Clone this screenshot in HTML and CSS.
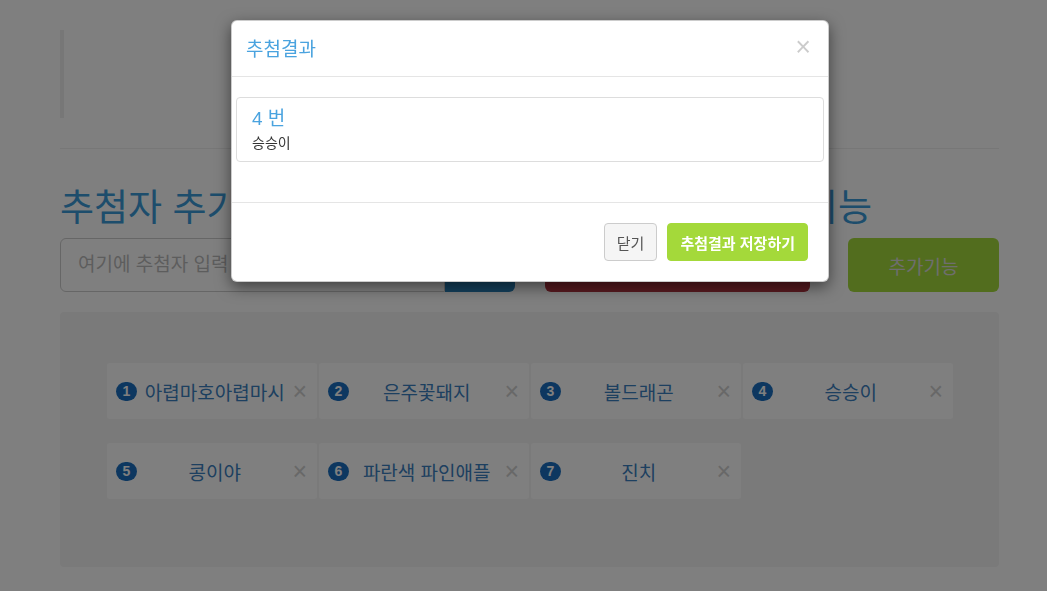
FILE: index.html
```html
<!DOCTYPE html>
<html lang="ko">
<head>
<meta charset="UTF-8">
<title>추첨기</title>
<meta name="viewport" content="width=device-width, initial-scale=1.0">
<link rel="stylesheet" href="styles.css">
</head>
<body>

<div class="container">
    <blockquote class="intro"></blockquote>
    <hr>

    <div class="top-row">
        <div class="col-left">
            <h1>추첨자 추가</h1>
            <div class="input-group">
                <input type="text" placeholder="여기에 추첨자 입력">
                <button class="btn-add">추가</button>
            </div>
        </div>
        <div class="col-right">
            <h1>추첨하기 및 추가기능</h1>
            <div class="action-row">
                <button class="btn-draw">추첨하기</button>
                <button class="btn-extra">추가기능</button>
            </div>
        </div>
    </div>

    <div class="well">
        <div class="tag"><span class="badge">1</span><span class="name">아렵마호아렵마시</span><span class="remove">×</span></div>
        <div class="tag"><span class="badge">2</span><span class="name">은주꽃돼지</span><span class="remove">×</span></div>
        <div class="tag"><span class="badge">3</span><span class="name">볼드래곤</span><span class="remove">×</span></div>
        <div class="tag"><span class="badge">4</span><span class="name">승승이</span><span class="remove">×</span></div>
        <div class="tag"><span class="badge">5</span><span class="name">콩이야</span><span class="remove">×</span></div>
        <div class="tag"><span class="badge">6</span><span class="name">파란색 파인애플</span><span class="remove">×</span></div>
        <div class="tag"><span class="badge">7</span><span class="name">진치</span><span class="remove">×</span></div>
    </div>
</div>

<div class="modal-backdrop"></div>

<div class="modal">
    <div class="modal-header">
        <span class="close">×</span>
        <h4 class="modal-title">추첨결과</h4>
    </div>
    <div class="modal-body">
        <div class="panel">
            <div class="result-no">4 번</div>
            <div class="result-name">승승이</div>
        </div>
    </div>
    <div class="modal-footer">
        <button class="btn btn-default">닫기</button>
        <button class="btn btn-save">추첨결과 저장하기</button>
    </div>
</div>

</body>
</html>
```

FILE: styles.css
```css
* {
    box-sizing: border-box;
}

body {
    margin: 0;
    font-family: "Liberation Sans", "Noto Sans CJK KR", sans-serif;
    font-size: 14px;
    color: #333;
    background: #fff;
}

.container {
    width: 939px;
    margin: 0 48px 0 60px;
}

.intro {
    margin: 30px 0 0 0;
    height: 88px;
    border-left: 4px solid #eee;
}

hr {
    margin: 30px 0 20px 0;
    border: 0;
    border-top: 1px solid #eee;
}

.top-row {
    display: flex;
    gap: 30px;
}

.col-left {
    width: 455px;
}

.col-right {
    flex: 1;
}

h1 {
    font-size: 37px;
    font-weight: normal;
    line-height: 40px;
    margin: 20px 0 9px 0;
    color: #3a9ad8;
    white-space: nowrap;
}

.input-group {
    display: flex;
    height: 54px;
}

.input-group input {
    flex: 1;
    border: 1px solid #ccc;
    border-radius: 6px 0 0 6px;
    padding: 0 17px;
    font-size: 19px;
    font-family: inherit;
}

.input-group input::placeholder {
    color: #bbb;
}

.btn-add {
    width: 70px;
    border: 0;
    border-radius: 0 6px 6px 0;
    background: #2980b9;
    color: #fff;
    font-size: 18px;
    font-family: inherit;
}

.action-row {
    display: flex;
    justify-content: space-between;
    height: 54px;
}

.btn-draw,
.btn-extra {
    border: 0;
    border-radius: 6px;
    color: #fff;
    font-size: 19px;
    font-family: inherit;
}

.btn-draw {
    width: 265px;
    background: #b33440;
}

.btn-extra {
    width: 151px;
    background: #a4db3c;
    color: #ddd;
}

.well {
    margin-top: 20px;
    height: 255px;
    background: #f5f5f5;
    border-radius: 4px;
    padding: 51px 46px 0 47px;
    display: grid;
    grid-template-columns: repeat(4, 1fr);
    grid-auto-rows: 56px;
    column-gap: 2px;
    row-gap: 24px;
    align-content: start;
}

.tag {
    display: flex;
    align-items: center;
    background: #fff;
    border-radius: 3px;
    padding: 0 10px 0 9px;
}

.badge {
    display: inline-block;
    min-width: 21px;
    height: 19px;
    line-height: 19px;
    border-radius: 10px;
    background: #1a6fc0;
    color: #fff;
    font-size: 14px;
    font-weight: bold;
    text-align: center;
}

.name {
    flex: 1;
    text-align: center;
    font-size: 19px;
    color: #3a80c0;
    white-space: nowrap;
}

.remove {
    font-size: 25px;
    line-height: 24px;
    color: #d0d0d0;
}

.modal-backdrop {
    position: fixed;
    inset: 0;
    background: rgba(0, 0, 0, .5);
}

.modal {
    position: absolute;
    left: 231px;
    top: 20px;
    width: 598px;
    background: #fff;
    border: 1px solid rgba(0, 0, 0, .2);
    border-radius: 6px;
    box-shadow: 0 5px 15px rgba(0, 0, 0, .5);
}

.modal-header {
    padding: 16px 15px 14px 14px;
    border-bottom: 1px solid #e5e5e5;
}

.modal-title {
    margin: 0;
    font-size: 19px;
    font-weight: normal;
    line-height: 25px;
    color: #4aa3df;
}

.close {
    float: right;
    margin-top: -4px;
    margin-right: 2px;
    font-size: 27px;
    line-height: 28px;
    color: #000;
    opacity: .2;
}

.modal-body {
    padding: 20px 4px;
}

.panel {
    border: 1px solid #ddd;
    border-radius: 4px;
    padding: 10px 15px 8px;
    margin-bottom: 20px;
}

.result-no {
    font-size: 19px;
    line-height: 22px;
    margin-bottom: 3px;
    color: #4aa3df;
}

.result-name {
    font-size: 14px;
    line-height: 20px;
    color: #333;
}

.modal-footer {
    padding: 20px;
    border-top: 1px solid #e5e5e5;
    display: flex;
    justify-content: flex-end;
    gap: 10px;
}

.btn {
    height: 38px;
    padding: 0 12px;
    border-radius: 4px;
    font-size: 15px;
    font-family: inherit;
}

.btn-default {
    background: #f5f5f5;
    border: 1px solid #ccc;
    color: #555;
}

.btn-save {
    background: #a4d93a;
    border: 1px solid #a4d93a;
    color: #fff;
    font-weight: bold;
}
```
